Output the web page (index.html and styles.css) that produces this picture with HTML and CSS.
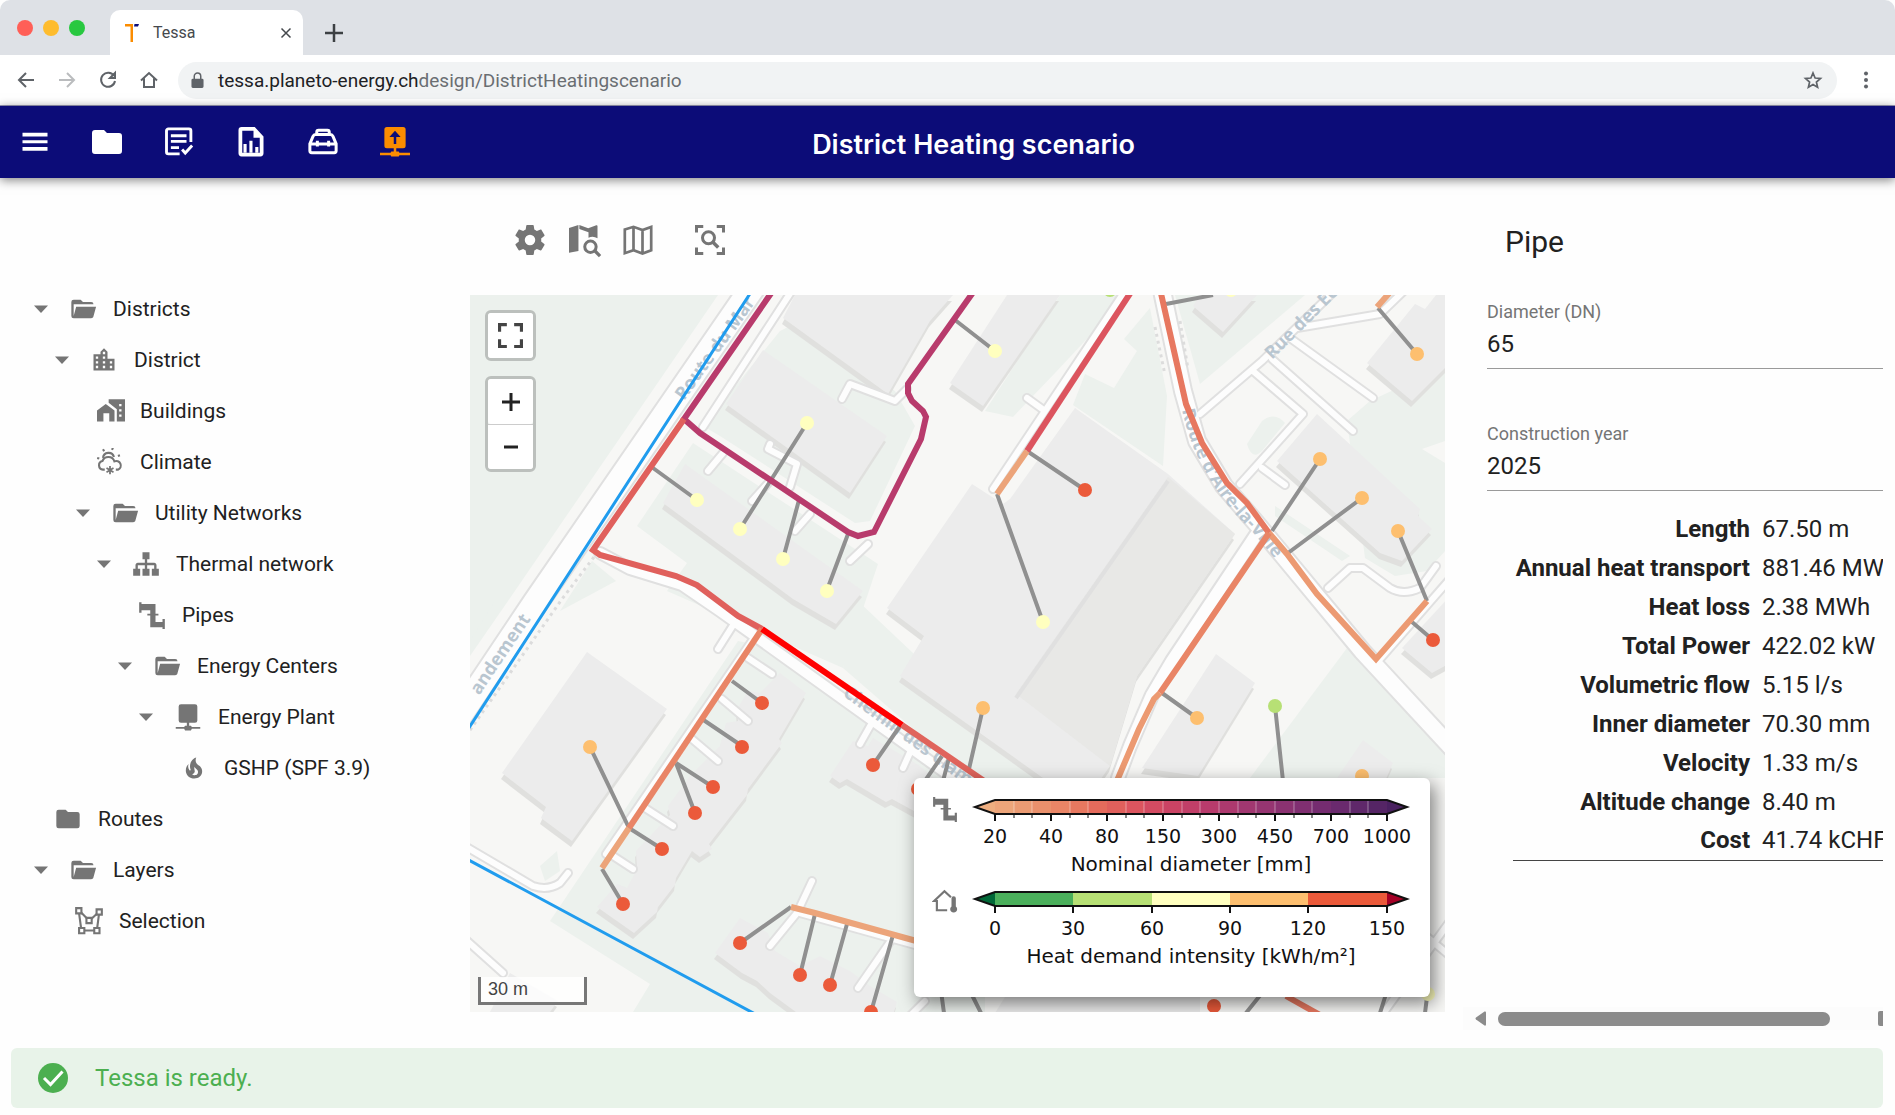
FILE: index.html
```html
<!DOCTYPE html>
<html lang="en">
  <head>
    <meta charset="utf-8" />
    <title>Tessa</title>
    <link rel="stylesheet" href="styles.css" />
  </head>
  <body>
    <svg class="sprite" aria-hidden="true">
      <symbol id="caret" viewBox="0 0 24 24"><path d="M6 9h12l-6 6.500z" /></symbol>
      <symbol id="folder" viewBox="0 0 24 24">
        <path d="M10 4H4a2 2 0 0 0-2 2v12a2 2 0 0 0 2 2h16a2 2 0 0 0 2-2V8a2 2 0 0 0-2-2h-8z" />
      </symbol>
      <symbol id="folder-open" viewBox="0 0 24 24">
        <path d="M19 20H4a2 2 0 0 1-2-2V6a2 2 0 0 1 2-2h6l2 2h7a2 2 0 0 1 2 2H4v10l2.140-8h17.070l-2.280 8.500c-.23.87-1.010 1.500-1.930 1.500z" />
      </symbol>
      <symbol id="city" viewBox="0 0 24 24">
        <path d="M19 15H17V13H19M19 19H17V17H19M13 7H11V5H13M13 11H11V9H13M13 15H11V13H13M13 19H11V17H13M7 11H5V9H7M7 15H5V13H7M7 19H5V17H7M15 11V5L12 2L9 5V7H3V21H21V11H15Z" />
      </symbol>
      <symbol id="home-city" viewBox="0 0 24 24">
        <path fill-rule="evenodd" d="M0 21V11.500L7.500 6 15 11.500V21h-4.500v-7h-5v7zM10 2h14v19h-7V10.500L10 5zM19 6v2h2V6zm0 4.500v2h2v-2zm0 4.500v2h2v-2z" />
      </symbol>
      <symbol id="climate" viewBox="0 0 24 24">
        <g fill="none" stroke="currentColor" stroke-width="1.800">
          <path d="M7.500 18.500H6a3.700 3.700 0 0 1-.5-7.300 5.500 5.500 0 0 1 10.300.3 3.600 3.600 0 0 1 3.200 7H17" />
          <path d="M6 8.500a4.800 4.800 0 0 1 9.400-.8" />
          <path d="M12 15.500v7M9 17.200l6 3.500M15 17.200l-6 3.500" stroke-width="1.500" />
          <path d="M6 1l1 1.800M14.500-.2l-.8 1.800M1 8.500l1.800.5M18.800 6.800l1.700-.6" />
        </g>
      </symbol>
      <symbol id="sitemap" viewBox="0 0 24 24">
        <path d="M9 2V8H11V11H5C3.890 11 3 11.890 3 13V16H1V22H7V16H5V13H11V16H9V22H15V16H13V13H19V16H17V22H23V16H21V13C21 11.890 20.110 11 19 11H13V8H15V2H9Z" />
      </symbol>
      <symbol id="pipe" viewBox="0 0 24 24">
        <path d="M1 1h2v1.500h12V11h2.500v1.500H15V18h6v-2.500h2V24h-2v-1.500h-10.500V12.500H8V11h2.500V8H3v2H1z" />
      </symbol>
      <symbol id="plant" viewBox="0 0 24 24">
        <path d="M6 1h12a2 2 0 0 1 2 2v12a2 2 0 0 1-2 2h-5v2.500h1.500l.8 1H22.500V22H15.300l-.8 1.500h-5L8.700 22H1.500v-1.500h7.200l.8-1H11V17H6a2 2 0 0 1-2-2V3a2 2 0 0 1 2-2z" />
      </symbol>
      <symbol id="plant-up" viewBox="0 0 24 24">
        <path fill-rule="evenodd" d="M5.500 0h13A2 2 0 0 1 20.500 2v13a2 2 0 0 1-2 2H13v2.500h2l.5 1H24v2h-8.500l-.5 1H9l-.5-1H0v-2h8.500l.5-1h2V17H5.500a2 2 0 0 1-2-2V2a2 2 0 0 1 2-2zM12 3L7.500 8H11v5.500h2V8h3.500z" />
      </symbol>
      <symbol id="fire" viewBox="0 0 24 24">
        <path d="M17.660 11.200c-.23-.3-.51-.56-.77-.82-.67-.6-1.430-1.030-2.070-1.660C13.330 7.260 13 4.850 13.950 3c-.95.23-1.780.75-2.490 1.320-2.590 2.080-3.610 5.750-2.390 8.900.04.1.08.2.08.33 0 .22-.15.42-.35.5-.23.1-.47.04-.66-.12a.58.58 0 0 1-.14-.17c-1.130-1.430-1.310-3.480-.55-5.120C5.780 10 4.870 12.300 5 14.470c.06.5.12 1 .29 1.500.14.6.41 1.200.71 1.730 1.080 1.730 2.950 2.970 4.960 3.220 2.140.27 4.430-.12 6.070-1.600 1.830-1.660 2.470-4.320 1.530-6.600l-.13-.26c-.21-.46-.77-1.260-.77-1.260m-3.160 6.300c-.28.24-.74.5-1.100.6-1.120.4-2.240-.16-2.900-.82 1.190-.28 1.900-1.160 2.110-2.050.17-.8-.15-1.460-.28-2.230-.12-.74-.1-1.370.17-2.060.19.38.39.76.63 1.060.77 1 1.980 1.440 2.240 2.800.04.14.06.28.06.43.03.82-.33 1.720-.93 2.270z" />
      </symbol>
      <symbol id="vector" viewBox="0 0 24 24">
        <g fill="none" stroke="currentColor" stroke-width="1.800">
          <path d="M1 1h4.500v4.500H1zM18.500 2H23v4.500h-4.500zM9.800 9.300h4.500v4.500H9.800zM3.500 18H8v4.500H3.500zM16.500 18H21v4.500h-4.500z" />
          <path d="M3.500 5.500l1.700 12.500M20.500 6.500L19 18M8 20.200h8.500M5.500 5l4.400 4.500M18.500 6l-4.300 4" />
        </g>
      </symbol>
      <symbol id="menu" viewBox="0 0 24 24"><path d="M2 4.500h20v3H2zM2 10.500h20v2.500H2zM2 16h20v3H2z" /></symbol>
      <symbol id="list-check" viewBox="0 0 24 24">
        <g fill="none" stroke="currentColor" stroke-width="2.300">
          <path d="M12.500 21.500H3.500a1.500 1.500 0 0 1-1.500-1.500V3a1.500 1.500 0 0 1 1.500-1.500H20A1.500 1.500 0 0 1 21.500 3v9" />
          <path d="M5.500 7H18M5.500 11.500H18M5.500 16.500H12M14.500 18l2.500 2.800 5.500-6" />
        </g>
      </symbol>
      <symbol id="file-chart" viewBox="0 0 24 24">
        <path fill-rule="evenodd" d="M4.500 0H15l7 7.500V21a2.500 2.500 0 0 1-2.500 2.500h-15A2.500 2.500 0 0 1 2 21V2.500A2.500 2.500 0 0 1 4.500 0zM5 3v17.500h14V8.500h-5V3z" />
        <path d="M6 13.500h2.500v7H6zM10.700 11h2.500v9.500h-2.500zM15.400 16h2.500v4.500h-2.500z" />
      </symbol>
      <symbol id="toolbox" viewBox="0 0 24 24">
        <g fill="none" stroke="currentColor" stroke-width="2.400">
          <path d="M7 5.500V4a1.500 1.500 0 0 1 1.500-1.500h7A1.500 1.500 0 0 1 17 4v1.500M6 6h12c1 0 1.600.6 2 1.500l2.500 6V19a1.500 1.500 0 0 1-1.500 1.500H3A1.500 1.500 0 0 1 1.500 19v-5.500l2.500-6C4.400 6.600 5 6 6 6zM1.500 13.500h21M7.500 11v4.500M16.500 11v4.500" />
        </g>
      </symbol>
      <symbol id="cog" viewBox="0 0 24 24">
        <path d="M12 15.500A3.500 3.500 0 0 1 8.500 12A3.500 3.500 0 0 1 12 8.500A3.500 3.500 0 0 1 15.500 12A3.500 3.500 0 0 1 12 15.500M19.430 12.970C19.470 12.650 19.500 12.330 19.500 12C19.500 11.670 19.470 11.340 19.430 11L21.540 9.370C21.730 9.220 21.780 8.950 21.660 8.730L19.660 5.270C19.540 5.050 19.270 4.960 19.050 5.050L16.560 6.050C16.040 5.660 15.500 5.320 14.870 5.070L14.500 2.420C14.460 2.180 14.250 2 14 2H10C9.750 2 9.540 2.180 9.500 2.420L9.130 5.070C8.500 5.320 7.960 5.660 7.440 6.050L4.950 5.050C4.730 4.960 4.460 5.050 4.340 5.270L2.340 8.730C2.210 8.950 2.270 9.220 2.460 9.370L4.570 11C4.530 11.340 4.500 11.670 4.500 12C4.500 12.330 4.530 12.650 4.570 12.970L2.460 14.630C2.270 14.780 2.210 15.050 2.340 15.270L4.340 18.730C4.460 18.950 4.730 19.030 4.950 18.950L7.440 17.940C7.960 18.340 8.500 18.680 9.130 18.930L9.500 21.580C9.540 21.820 9.750 22 10 22H14C14.250 22 14.460 21.820 14.500 21.580L14.870 18.930C15.500 18.670 16.040 18.340 16.560 17.940L19.050 18.950C19.270 19.030 19.540 18.950 19.660 18.730L21.660 15.270C21.780 15.050 21.730 14.780 21.540 14.630L19.430 12.970Z" />
      </symbol>
      <symbol id="map-search" viewBox="0 0 24 24">
        <path d="M2 4L8.300 2v17.300L2 20.500zM8.900 2l5.900 2.200 5.400-2a.6.6 0 0 1 .8.500v8.200a6 6 0 0 0-6-.4V6.800L8.900 4.600z" />
        <circle cx="16.300" cy="16.500" r="3.800" fill="none" stroke="currentColor" stroke-width="2" />
        <path d="M19 19l3.700 3.700" stroke="currentColor" stroke-width="2.200" />
      </symbol>
      <symbol id="map-outline" viewBox="0 0 24 24">
        <path d="M3.200 5L9 3.200l6 2.100 5.800-2v15.500L15 21l-6-2.200-5.800 2zM9 3.200v15.600M15 5.300V21" fill="none" stroke="currentColor" stroke-width="1.800" />
      </symbol>
      <symbol id="focus" viewBox="0 0 24 24">
        <g fill="none" stroke="currentColor" stroke-width="2">
          <path d="M3 7V3h4.500M16.500 3H21v4M21 17v4h-4.500M7.500 21H3v-4" />
          <circle cx="11" cy="10.500" r="4" />
          <path d="M14 13.500l3.500 3.500" stroke-width="2.300" />
        </g>
      </symbol>
      <symbol id="full" viewBox="0 0 24 24">
        <path d="M1.500 8.500v-7h7M15.500 1.500h7v7M22.500 15.500v7h-7M8.500 22.500h-7v-7" fill="none" stroke="currentColor" stroke-width="3" />
      </symbol>
      <symbol id="house-temp" viewBox="0 0 24 24">
        <path d="M14 20.500H4.500v-8.500H2l9.500-9 6 5.500" fill="none" stroke="currentColor" stroke-width="2" />
        <path d="M18 9.500a2 2 0 0 1 4 0V17a3.200 3.200 0 1 1-4 0z" />
      </symbol>
    </svg>

    <header class="browser">
      <div class="tabs">
        <span class="light red"></span>
        <span class="light yellow"></span>
        <span class="light green"></span>
        <div class="tab">
          <svg class="favicon" viewBox="0 0 14 18">
            <path d="M0 0h8v2H8v16H5.500V2.500H0z" fill="#fb8c00" />
            <path d="M9.500 0H14l-1 2.500H9z" fill="#0c0c78" />
          </svg>
          <span>Tessa</span>
          <button class="close" aria-label="Close tab">
            <svg viewBox="0 0 12 12"><path d="M1.500 1.500l9 9M10.500 1.500l-9 9" /></svg>
          </button>
        </div>
        <button class="new-tab" aria-label="New tab">
          <svg viewBox="0 0 18 18"><path d="M9 0v18M0 9h18" /></svg>
        </button>
      </div>
      <div class="toolbar">
        <button aria-label="Back">
          <svg viewBox="0 0 24 24"><path d="M20 12H5M12 5l-7 7 7 7" /></svg>
        </button>
        <button class="disabled" aria-label="Forward">
          <svg viewBox="0 0 24 24"><path d="M4 12h15M12 5l7 7-7 7" /></svg>
        </button>
        <button aria-label="Reload">
          <svg viewBox="0 0 24 24"><path d="M18 8A7 7 0 1 0 19 13M19 5v5h-5z" /></svg>
        </button>
        <button aria-label="Home">
          <svg viewBox="0 0 24 24"><path d="M4 12.500l8-7.500 8 7.500M7 10.500V19h10v-8.500" /></svg>
        </button>
        <div class="address">
          <svg class="lock" viewBox="0 0 14 18">
            <path d="M2 7h10a1.500 1.500 0 0 1 1.500 1.500v7A1.500 1.500 0 0 1 12 17H2A1.500 1.500 0 0 1 .5 15.500v-7A1.500 1.500 0 0 1 2 7z" />
            <path d="M3.500 8V4.500a3.500 3.500 0 0 1 7 0V8" fill="none" stroke="currentColor" stroke-width="1.600" />
          </svg>
          <span class="url"><b>tessa.planeto-energy.ch</b>design/DistrictHeatingscenario</span>
          <button class="star" aria-label="Bookmark">
            <svg viewBox="0 0 24 24"><path d="M12 5l2.100 5 5.400.4-4.100 3.600 1.200 5.300-4.600-2.800-4.600 2.800 1.200-5.300-4.100-3.600 5.400-.4z" /></svg>
          </button>
        </div>
        <button class="dots" aria-label="Browser menu">
          <svg viewBox="0 0 24 24"><circle cx="12" cy="5.500" r="2" /><circle cx="12" cy="12" r="2" /><circle cx="12" cy="18.500" r="2" /></svg>
        </button>
      </div>
    </header>

    <nav class="app-bar">
      <div class="app-icons">
        <button aria-label="Menu"><svg class="icon-lg"><use href="#menu" /></svg></button>
        <button aria-label="Projects"><svg class="icon-lg"><use href="#folder" /></svg></button>
        <button aria-label="Tasks"><svg class="icon-lg"><use href="#list-check" /></svg></button>
        <button aria-label="Reports"><svg class="icon-lg"><use href="#file-chart" /></svg></button>
        <button aria-label="Tools"><svg class="icon-lg"><use href="#toolbox" /></svg></button>
        <button class="active" aria-label="Publish"><svg class="icon-lg"><use href="#plant-up" /></svg></button>
      </div>
      <h1>District Heating scenario</h1>
    </nav>

    <main>
      <aside class="tree">
        <ul>
          <li>
            <div class="row"><button aria-label="Collapse"><svg class="icon"><use href="#caret" /></svg></button><svg class="icon"><use href="#folder-open" /></svg>Districts</div>
            <ul>
              <li>
                <div class="row"><button aria-label="Collapse"><svg class="icon"><use href="#caret" /></svg></button><svg class="icon"><use href="#city" /></svg>District</div>
                <ul>
                  <li><div class="row leaf"><svg class="icon wide"><use href="#home-city" /></svg>Buildings</div></li>
                  <li><div class="row leaf"><svg class="icon"><use href="#climate" /></svg>Climate</div></li>
                  <li>
                    <div class="row"><button aria-label="Collapse"><svg class="icon"><use href="#caret" /></svg></button><svg class="icon"><use href="#folder-open" /></svg>Utility Networks</div>
                    <ul>
                      <li>
                        <div class="row"><button aria-label="Collapse"><svg class="icon"><use href="#caret" /></svg></button><svg class="icon"><use href="#sitemap" /></svg>Thermal network</div>
                        <ul>
                          <li><div class="row leaf"><svg class="icon"><use href="#pipe" /></svg>Pipes</div></li>
                          <li>
                            <div class="row"><button aria-label="Collapse"><svg class="icon"><use href="#caret" /></svg></button><svg class="icon"><use href="#folder-open" /></svg>Energy Centers</div>
                            <ul>
                              <li>
                                <div class="row"><button aria-label="Collapse"><svg class="icon"><use href="#caret" /></svg></button><svg class="icon"><use href="#plant" /></svg>Energy Plant</div>
                                <ul>
                                  <li><div class="row leaf"><svg class="icon"><use href="#fire" /></svg>GSHP (SPF 3.9)</div></li>
                                </ul>
                              </li>
                            </ul>
                          </li>
                        </ul>
                      </li>
                    </ul>
                  </li>
                </ul>
              </li>
            </ul>
          </li>
          <li><div class="row leaf"><svg class="icon"><use href="#folder" /></svg>Routes</div></li>
          <li>
            <div class="row"><button aria-label="Collapse"><svg class="icon"><use href="#caret" /></svg></button><svg class="icon"><use href="#folder-open" /></svg>Layers</div>
            <ul>
              <li><div class="row leaf"><svg class="icon"><use href="#vector" /></svg>Selection</div></li>
            </ul>
          </li>
        </ul>
      </aside>

      <section class="center">
        <div class="map-tools">
          <button aria-label="Settings"><svg class="icon-lg"><use href="#cog" /></svg></button>
          <button aria-label="Search on map"><svg class="icon-lg"><use href="#map-search" /></svg></button>
          <button aria-label="Base map"><svg class="icon-lg"><use href="#map-outline" /></svg></button>
          <button class="apart" aria-label="Zoom to extent"><svg class="icon-lg"><use href="#focus" /></svg></button>
        </div>

        <div class="map">
          <svg class="canvas" viewBox="470 294 975 717" preserveAspectRatio="xMinYMin slice">
            <defs>
              <g id="roads">
                <path class="w26" d="M757 280L535 602 440 744" />
                <path class="w18" d="M1160 280L1183 390 1197 440 1224 485 1256 522 1362 650 1460 756" />
                <path class="w14" d="M1256 534L1172 660 1152 694 1130 745 1118 777" />
                <path class="w10" d="M1345 280L1262 360 1200 413M1253 370L1303 413 1240 483M1262 467L1285 484M1272 358L1353 430M1290 337L1373 397M1297 327L1380 313 1410 284M1328 587L1350 567H1363L1390 587Q1403 595 1420 587L1436 565M1374 665L1450 578" />
                <path class="w12" d="M600 552L630 568 682 584 720 610 762 640 985 800" />
                <path class="w10" d="M793 288L703 426M842 398L850 383 895 400 907 388M770 443L768 448 797 463 790 486M770 480L752 500M723 452L708 470M810 513L795 530M868 543L850 560M1125 290L993 488M1027 397L1045 410" />
                <path class="w10" d="M737 618L718 648M748 657L772 673M722 698L748 720M692 738L718 760M645 807L673 825M610 853L633 868M756 634L606 853M873 720L860 743M912 747L903 767" />
                <path class="w10" d="M465 845L533 885Q548 890 560 882L568 872M465 938L503 972M812 880L797 912 770 945M892 938L858 987M800 912L915 944M925 1000L905 1020M1385 1010L1450 920M1420 930L1450 955" />
              </g>
            </defs>

            <rect class="ground" x="470" y="294" width="975" height="717" />
            <g class="grass">
              <path d="M470 294H718L508 600 470 655z" />
              <path d="M780 330L800 320 895 390 915 425 870 520 855 522 720 435 703 425z" />
              <path d="M693 442L637 525 687 562 667 590 843 667 878 563z" />
              <path d="M592 560L560 610 616 580z" />
              <path d="M738 640L768 646 985 795V1011H633L650 983 550 920z" />
              <path d="M843 667L858 600 1045 777 985 790z" />
              <path d="M1060 294H1128L1055 372 1013 416 985 410z" />
              <path d="M1085 373L1114 387 1137 350 1124 338 1150 307 1167 395 1163 465 1073 404z" />
              <path d="M1175 294H1305L1200 383z" />
              <path d="M1347 420L1370 400 1445 365V440L1422 448 1445 462V550L1427 570 1395 575 1365 557z" />
              <path d="M1247 443L1262 420Q1275 410 1285 422L1262 450Q1252 460 1247 443z" />
              <path d="M1275 505L1350 555 1342 560 1275 515z" />
              <path d="M1347 647L1250 777H1445V742z" />
              <path d="M470 600V640L495 600zM540 865L557 850 560 870 545 880z" />
            </g>

            <g class="buildings">
              <path d="M795 294H953L930 320 888 393 783 317z" />
              <path d="M763 349L887 435 850 492 726 403z" />
              <path d="M685 463L863 590 836 623 793 598 663 502z" />
              <path d="M587 651L667 708 572 840 541 817 546 806 502 772z" />
              <path d="M780 672L806 692 779 738 782 742 748 788 747 794 709 843 712 848 700 856 692 850 676 877 675 884 658 906 657 911 634 932 597 906 617 883 627 887 637 868 636 850 670 814 668 805 690 775 715 750 720 745 726 722 738 720 737 708 748 690 760 692z" />
              <path d="M740 917L768 932 775 950 800 965 820 955 850 970 870 985 897 1001 893 1014H800L770 992 757 980 742 972 715 952z" />
              <path d="M853 740L868 745 873 737 920 765 960 800V834L914 810 892 798 886 801 847 778 840 782 830 775z" />
              <path d="M1075 407L1168 473 1235 533 1137 675 1110 765 1098 782H1050L900 675 924 635 887 607 972 483 1003 503 1010 498z" />
              <path d="M1007 294H1060L983 405 950 382z" />
              <path d="M1317 413L1420 508 1418 515 1432 528 1402 560 1380 552 1277 460z" />
              <path d="M1415 303L1425 308 1436 294H1450V362L1412 400 1367 362z" />
              <path d="M1200 294H1257L1223 331 1193 305z" />
              <path d="M1216 653L1255 682 1198 775 1142 767z" />
              <path d="M1363 739L1393 762 1385 780H1335z" />
              <path d="M1450 595V662L1432 672 1402 647z" />
              <path d="M1015 980H1200V1020H990z" />
              <path d="M510 972L558 1000 550 1011H490z" />
            </g>
            <path class="annex" d="M1168 476L1235 533 1137 675 1110 765 1016 693z" />
            <path class="ridge" d="M1168 480L1016 697" />

            <use href="#roads" class="casing" />
            <use href="#roads" class="fill" />
            <path class="dotted" d="M594 556L562 598 468 732M1155 326L1165 374M1180 320L1188 368" />

            <g class="street">
              <path id="arenieres" d="M1182 409Q1198 480 1252 530L1330 625" fill="none" />
              <text transform="translate(684 400) rotate(-54)">Route du Mar</text>
              <text transform="translate(531 618) rotate(-56)" text-anchor="end">andement</text>
              <text transform="translate(1272 359) rotate(-45)">Rue des Ec</text>
              <text><textPath href="#arenieres">Route d'Aire-la-Ville</textPath></text>
              <text transform="translate(842 694) rotate(36)">Chemin des Clam</text>
            </g>

            <path class="boundary" d="M753 288L465 733M465 857L757 1014" />

            <g class="links">
              <path d="M653 467L697 499M807 422L740 528M799 499L783 558M848 533L827 589" />
              <path d="M732 680L762 702M702 718L742 745M676 762L713 786M676 762L695 812M629 827L662 848M629 827L590 746M602 868L623 903" />
              <path d="M900 725L873 764M942 755L918 790M949 757L943 780M983 707L969 768" />
              <path d="M791 906L740 942M815 913L800 974M847 923L830 984M893 934L871 1011" />
              <path d="M955 319L995 350M1027 450L1085 489M997 493L1043 621M1166 303L1213 294M1378 307L1417 353" />
              <path d="M1272 530L1320 458M1288 552L1362 497M1427 600L1398 530M1412 621L1433 639M1162 692L1197 717M1275 705L1283 780" />
              <path d="M941 990L944 1012M970 990L981 1012M1262 992L1246 1012M1387 990L1380 1012M1427 996L1425 1012" />
            </g>

            <g class="pipes">
              <path stroke="#b83b6c" d="M774 288L684 418 700 432 848 531 858 535 874 531 921 438 926 416 923 410 912 400 908 392V383L974 290" />
              <path stroke="#e0605c" d="M684 418L593 549 600 554 676 575 697 584 738 615 762 628" />
              <path stroke="#e0645c" d="M902 724L990 784" />
              <path stroke="#e98566" d="M762 628L629 827" />
              <path stroke="#eca47a" d="M629 827L602 867M791 906L815 912 920 941" />
              <path stroke="#dc555f" d="M1133 288L1027 450" />
              <path stroke="#eca47a" d="M1027 450L997 493M1393 288L1377 306" />
              <path stroke="#e77860" d="M1160 288L1186 403 1202 442 1227 482 1247 502 1269 532" />
              <path stroke="#ec9a72" d="M1269 532L1287 553 1317 593 1376 658 1427 600" />
              <path stroke="#e98566" d="M1269 532L1182 660 1160 692" />
              <path stroke="#ec9a72" d="M1160 692L1154 698 1139 728 1116 782" />
              <path stroke="#e77860" d="M1286 995L1320 1014" />
              <path stroke="#ff0000" d="M762 628L902 724" />
            </g>

            <g fill="#ffffbf">
              <circle cx="697" cy="499" r="7" /><circle cx="807" cy="422" r="7" /><circle cx="740" cy="528" r="7" />
              <circle cx="783" cy="558" r="7" /><circle cx="827" cy="590" r="7" /><circle cx="995" cy="350" r="7" />
              <circle cx="1043" cy="621" r="7" /><circle cx="1231" cy="289" r="7" /><circle cx="1428" cy="993" r="7" />
            </g>
            <g fill="#fdbf6f">
              <circle cx="590" cy="746" r="7" /><circle cx="983" cy="707" r="7" /><circle cx="1197" cy="717" r="7" />
              <circle cx="1320" cy="458" r="7" /><circle cx="1362" cy="497" r="7" /><circle cx="1398" cy="530" r="7" />
              <circle cx="1417" cy="353" r="7" /><circle cx="1362" cy="775" r="7" />
            </g>
            <g fill="#eb5a3a">
              <circle cx="762" cy="702" r="7" /><circle cx="742" cy="746" r="7" /><circle cx="713" cy="786" r="7" />
              <circle cx="695" cy="812" r="7" /><circle cx="662" cy="848" r="7" /><circle cx="623" cy="903" r="7" />
              <circle cx="873" cy="764" r="7" /><circle cx="918" cy="788" r="7" /><circle cx="740" cy="942" r="7" />
              <circle cx="800" cy="974" r="7" /><circle cx="830" cy="984" r="7" /><circle cx="871" cy="1011" r="7" />
              <circle cx="1085" cy="489" r="7" /><circle cx="1433" cy="639" r="7" /><circle cx="1214" cy="1005" r="7" />
            </g>
            <g fill="#b7e075">
              <circle cx="1110" cy="289" r="7" /><circle cx="1275" cy="705" r="7" />
            </g>
          </svg>

          <div class="controls">
            <div class="control"><button aria-label="Full screen"><svg class="full"><use href="#full" /></svg></button></div>
            <div class="control">
              <button aria-label="Zoom in"><svg viewBox="0 0 18 18"><path d="M9 0v18M0 9h18" /></svg></button>
              <button aria-label="Zoom out"><svg viewBox="0 0 18 18"><path d="M2 9h14" /></svg></button>
            </div>
          </div>
          <div class="scale">30 m</div>

          <div class="legend">
            <div class="legend-row">
              <svg class="legend-icon"><use href="#pipe" /></svg>
              <svg class="bar" viewBox="0 0 450 92">
                <path d="M30 9L10 16 30 23z" fill="#eeae80" />
                <rect x="30" y="9" width="19" height="14" fill="#eda57a" />
                <rect x="49" y="9" width="19" height="14" fill="#eb9b73" />
                <rect x="67" y="9" width="19" height="14" fill="#e9906c" />
                <rect x="86" y="9" width="19" height="14" fill="#e98566" />
                <rect x="105" y="9" width="19" height="14" fill="#e77860" />
                <rect x="123" y="9" width="19" height="14" fill="#e56b5c" />
                <rect x="142" y="9" width="19" height="14" fill="#e0605c" />
                <rect x="161" y="9" width="19" height="14" fill="#dc555f" />
                <rect x="179" y="9" width="19" height="14" fill="#d34b62" />
                <rect x="198" y="9" width="19" height="14" fill="#ca4364" />
                <rect x="217" y="9" width="19" height="14" fill="#c13f68" />
                <rect x="235" y="9" width="19" height="14" fill="#b83b6c" />
                <rect x="254" y="9" width="19" height="14" fill="#ad396e" />
                <rect x="273" y="9" width="19" height="14" fill="#a13770" />
                <rect x="291" y="9" width="19" height="14" fill="#963571" />
                <rect x="310" y="9" width="19" height="14" fill="#8b3271" />
                <rect x="329" y="9" width="19" height="14" fill="#802f71" />
                <rect x="347" y="9" width="19" height="14" fill="#752c70" />
                <rect x="366" y="9" width="19" height="14" fill="#6a2a6e" />
                <rect x="385" y="9" width="19" height="14" fill="#5f286a" />
                <rect x="403" y="9" width="19" height="14" fill="#552565" />
                <path d="M422 9L442 16 422 23z" fill="#4a2160" />
                <path class="split" d="M49 9v14M67 9v14M105 9v14M123 9v14M161 9v14M179 9v14M198 9v14M217 9v14M235 9v14M254 9v14M273 9v14M291 9v14M310 9v14M329 9v14M347 9v14M385 9v14M403 9v14" />
                <path class="outline" d="M30 9H422L442 16 422 23H30L10 16z" />
                <path class="tick" d="M30 23v7M86 23v7M142 23v7M198 23v7M254 23v7M310 23v7M366 23v7M422 23v7" />
                <path class="tick minor" d="M49 23v4M67 23v4M105 23v4M123 23v4M161 23v4M179 23v4M217 23v4M235 23v4M273 23v4M291 23v4M329 23v4M347 23v4M385 23v4M403 23v4" />
                <text x="30" y="52">20</text><text x="86" y="52">40</text><text x="142" y="52">80</text>
                <text x="198" y="52">150</text><text x="254" y="52">300</text><text x="310" y="52">450</text>
                <text x="366" y="52">700</text><text x="422" y="52">1000</text>
                <text class="caption" x="226" y="80">Nominal diameter [mm]</text>
              </svg>
            </div>
            <div class="legend-row">
              <svg class="legend-icon"><use href="#house-temp" /></svg>
              <svg class="bar" viewBox="0 0 450 92">
                <path d="M30 9L10 16 30 23z" fill="#006837" />
                <rect x="30" y="9" width="79" height="14" fill="#4bb05c" />
                <rect x="108" y="9" width="79" height="14" fill="#b7e075" />
                <rect x="187" y="9" width="79" height="14" fill="#ffffbf" />
                <rect x="265" y="9" width="79" height="14" fill="#fdbf6f" />
                <rect x="343" y="9" width="79" height="14" fill="#eb5a3a" />
                <path d="M422 9L442 16 422 23z" fill="#a50026" />
                <path class="outline" d="M30 9H422L442 16 422 23H30L10 16z" />
                <path class="tick" d="M30 23v7M108 23v7M187 23v7M265 23v7M343 23v7M422 23v7" />
                <text x="30" y="52">0</text><text x="108" y="52">30</text><text x="187" y="52">60</text>
                <text x="265" y="52">90</text><text x="343" y="52">120</text><text x="422" y="52">150</text>
                <text class="caption" x="226" y="80">Heat demand intensity [kWh/m²]</text>
              </svg>
            </div>
          </div>
        </div>
      </section>

      <aside class="panel">
        <div class="panel-body">
          <h2>Pipe</h2>
          <div class="field">
            <label for="diameter">Diameter (DN)</label>
            <input id="diameter" type="text" value="65" />
          </div>
          <div class="field">
            <label for="year">Construction year</label>
            <input id="year" type="text" value="2025" />
          </div>
          <table>
            <tbody>
              <tr><th>Length</th><td>67.50 m</td></tr>
              <tr><th>Annual heat transport</th><td>881.46 MWh</td></tr>
              <tr><th>Heat loss</th><td>2.38 MWh</td></tr>
              <tr><th>Total Power</th><td>422.02 kW</td></tr>
              <tr><th>Volumetric flow</th><td>5.15 l/s</td></tr>
              <tr><th>Inner diameter</th><td>70.30 mm</td></tr>
              <tr><th>Velocity</th><td>1.33 m/s</td></tr>
              <tr><th>Altitude change</th><td>8.40 m</td></tr>
              <tr><th>Cost</th><td>41.74 kCHF</td></tr>
            </tbody>
          </table>
        </div>
        <div class="scrollbar">
          <svg viewBox="0 0 11 15"><path d="M11 1.500v12q0 1.500-1.500 1L1 8.500q-1-1 0-2L9.500.5Q11 0 11 1.500z" /></svg>
          <span class="thumb"></span>
          <span class="end"></span>
        </div>
      </aside>
    </main>

    <footer class="status">
      <svg viewBox="0 0 30 30"><circle cx="15" cy="15" r="15" /><path d="M6 15l6.500 6.500L24.500 8.500" /></svg>
      Tessa is ready.
    </footer>
  </body>
</html>
```
FILE: styles.css
```css
* {
  box-sizing: border-box;
}

body {
  margin: 0;
  min-height: 100vh;
  display: flex;
  flex-direction: column;
  background-color: #fefefe;
  color: #212121;
  font-family: Roboto, "Liberation Sans", sans-serif;
  overflow-x: hidden;
}

button {
  display: flex;
  align-items: center;
  justify-content: center;
  padding: 0;
  border: none;
  background: none;
  color: inherit;
  cursor: pointer;
}

ul {
  list-style: none;
  margin: 0;
  padding: 0;
}

svg {
  display: block;
  flex: none;
  fill: currentColor;
}

.sprite {
  position: absolute;
  width: 0;
  height: 0;
}

.icon {
  width: 28px;
  height: 28px;
  color: #757575;
  overflow: visible;
}

.icon-lg {
  width: 36px;
  height: 36px;
}

/* browser frame */
.browser {
  border-radius: 10px 10px 0 0;
  background-color: #dee1e6;
  overflow: hidden;
}

.tabs {
  display: flex;
  align-items: center;
  gap: 10px;
  height: 55px;
  padding-left: 17px;
}

.light {
  width: 16px;
  height: 16px;
  border-radius: 50%;
}

.red {
  background-color: #ff5f57;
}

.yellow {
  background-color: #febc2e;
}

.green {
  background-color: #28c840;
}

.tab {
  display: flex;
  align-items: center;
  align-self: flex-end;
  gap: 14px;
  width: 193px;
  height: 45px;
  margin-left: 15px;
  padding: 0 11px 0 15px;
  border-radius: 10px 10px 0 0;
  background-color: #fff;
  color: #45494d;
  font-size: 16px;
}

.favicon {
  width: 14px;
  height: 18px;
}

.close {
  margin-left: auto;
}

.close svg {
  width: 12px;
  height: 12px;
  stroke: #45494d;
  stroke-width: 1.5;
}

.new-tab {
  margin: 10px 0 0 12px;
}

.new-tab svg {
  width: 18px;
  height: 18px;
  stroke: #3c4043;
  stroke-width: 2.5;
}

.toolbar {
  display: flex;
  align-items: center;
  gap: 17px;
  height: 51px;
  padding: 0 17px 0 14px;
  background-color: #fff;
  border-bottom: 1px solid #9a9ab8;
  color: #5f6368;
}

.toolbar button svg {
  width: 24px;
  height: 24px;
  fill: none;
  stroke: currentColor;
  stroke-width: 2;
}

.toolbar .disabled {
  color: #babcbe;
}

.toolbar .dots svg {
  fill: currentColor;
  stroke: none;
}

.address {
  flex: 1;
  display: flex;
  align-items: center;
  height: 37px;
  padding: 0 12px 0 13px;
  border-radius: 19px;
  background-color: #f1f3f4;
}

.toolbar .star svg {
  stroke-width: 1.7;
}

.lock {
  width: 13px;
  height: 17px;
}

.url {
  flex: 1;
  margin-left: 14px;
  color: #6a6e72;
  font-size: 19px;
}

.url b {
  color: #202124;
  font-weight: 400;
}

/* application bar */
.app-bar {
  display: grid;
  grid-template-columns: 470px 1fr 450px;
  align-items: center;
  height: 72px;
  background-color: #0c0c78;
  color: #fff;
  box-shadow: 0 2px 10px rgba(0, 0, 0, 0.5);
  z-index: 1;
}

.app-icons {
  display: flex;
  gap: 36px;
  padding-left: 17px;
}

.app-icons .active {
  color: #fb8c00;
}

.app-icons svg {
  padding: 3px;
}

.app-icons svg:has([href="#folder"]) {
  padding: 0;
}

.app-bar h1 {
  margin: 0;
  padding: 5px 0 0 32px;
  font: 600 27px Inter, "Open Sans", sans-serif;
  text-align: center;
}

/* three columns */
main {
  flex: 1;
  display: grid;
  grid-template-columns: 470px 1fr 450px;
}

.tree {
  padding-top: 105px;
  font-size: 21px;
}

.tree ul ul {
  padding-left: 21px;
}

.row {
  display: flex;
  align-items: center;
  gap: 16px;
  height: 51px;
  padding-left: 27px;
  white-space: nowrap;
}

.row button {
  margin-right: -2px;
}

.row.leaf {
  padding-left: 54px;
}

.wide {
  width: 30px;
  margin-right: -2px;
}

.center {
  display: flex;
  flex-direction: column;
  padding-bottom: 36px;
}

.map-tools {
  display: flex;
  align-items: center;
  gap: 18px;
  height: 117px;
  padding: 7px 0 0 42px;
  color: #757575;
}

.apart {
  margin-left: 18px;
}

/* map */
.map {
  position: relative;
  flex: 1;
  min-height: 600px;
  overflow: hidden;
}

.canvas {
  position: absolute;
  width: 100%;
  height: 100%;
}

.ground {
  fill: #f7f7f5;
}

.grass {
  fill: #ecf1ed;
}

.buildings {
  fill: #ececec;
  filter: drop-shadow(-1px 6px 0 #e0e0de);
}

.annex {
  fill: #e8e8e6;
}

.ridge {
  fill: none;
  stroke: #e0e0e0;
  stroke-width: 4;
}

.casing,
.fill {
  fill: none;
  stroke-linecap: round;
  stroke-linejoin: round;
}

.casing {
  stroke: #e0e0e0;
  --case: 4px;
}

.fill {
  stroke: #fdfdfd;
  --case: 0px;
}

.w10 {
  stroke-width: calc(6px + var(--case));
}

.w12 {
  stroke-width: calc(10px + var(--case));
}

.w14 {
  stroke-width: calc(12px + var(--case));
}

.w18 {
  stroke-width: calc(16px + var(--case));
}

.w26 {
  stroke-width: calc(24px + var(--case));
}

.dotted {
  fill: none;
  stroke: #dcdcdc;
  stroke-width: 3;
  stroke-dasharray: 3 4;
}

.street {
  fill: #b9c6d0;
  font: 700 18px "Open Sans", sans-serif;
}

.boundary {
  fill: none;
  stroke: #209cee;
  stroke-width: 3;
}

.links {
  fill: none;
  stroke: #909090;
  stroke-width: 4;
}

.pipes {
  fill: none;
  stroke-width: 6;
}

.controls {
  position: absolute;
  top: 15px;
  left: 15px;
  display: flex;
  flex-direction: column;
  gap: 15px;
}

.control {
  border: 3px solid #bcc0bd;
  border-radius: 6px;
}

.control button {
  width: 45px;
  height: 45px;
  border-radius: 3px;
  background-color: #fff;
}

.control button + button {
  border-top: 1px solid #ccc;
  border-radius: 0 0 3px 3px;
}

.control svg {
  width: 18px;
  height: 18px;
  stroke: #222;
  stroke-width: 3;
}

.control .full {
  width: 25px;
  height: 25px;
  stroke: none;
  color: #444;
}

.scale {
  position: absolute;
  left: 8px;
  bottom: 7px;
  width: 109px;
  height: 28px;
  padding-left: 7px;
  border: 3px solid #777;
  border-top: none;
  background-color: rgba(255, 255, 255, 0.8);
  color: #444;
  font: 18px/24px "Liberation Sans", sans-serif;
}

.legend {
  position: absolute;
  right: 15px;
  bottom: 15px;
  padding: 13px 15px 22px 18px;
  border-radius: 6px;
  background-color: #fff;
  box-shadow: 4px 6px 18px rgba(0, 0, 0, 0.5);
}

.legend-row {
  display: flex;
  gap: 5px;
}

.legend-icon {
  width: 26px;
  height: 26px;
  margin: 5px 2px 0 0;
  color: #757575;
}

.bar {
  width: 450px;
  height: 92px;
  overflow: visible;
}

.bar text {
  fill: #111;
  font: 19px "DejaVu Sans", sans-serif;
  text-anchor: middle;
}

.bar .caption {
  font-size: 20px;
}

.split {
  stroke: rgba(255, 255, 255, 0.4);
}

.outline {
  fill: none;
  stroke: #111;
  stroke-width: 2;
}

.tick {
  stroke: #111;
  stroke-width: 2;
}

.tick.minor {
  stroke-width: 1;
}

/* details panel */
.panel {
  display: flex;
  flex-direction: column;
  margin: 0 12px 0 18px;
  overflow: hidden;
}

.panel-body {
  flex: 1;
  padding: 46px 0 0 24px;
}

.panel h2 {
  margin: 0 0 41px 18px;
  font-size: 30px;
  font-weight: 400;
  line-height: 36px;
}

.field {
  margin-bottom: 54px;
}

.field label {
  display: block;
  color: #757575;
  font-size: 18px;
  line-height: 22px;
}

.field input {
  width: 100%;
  height: 46px;
  padding: 0 0 4px;
  border: none;
  border-bottom: 1px solid #9a9a9a;
  background: none;
  color: #212121;
  font: 24px Roboto, sans-serif;
}

.panel table {
  width: 420px;
  margin: -36px 0 0 26px;
  border-collapse: collapse;
  border-bottom: 1px solid #444;
  font-size: 24px;
  white-space: nowrap;
}

.panel tr {
  height: 39px;
}

.panel th {
  width: 237px;
  padding: 0;
  text-align: right;
}

.panel td {
  padding: 0 0 0 12px;
}

.scrollbar {
  display: flex;
  align-items: center;
  gap: 12px;
  height: 23px;
  margin-bottom: 18px;
  padding-left: 12px;
  background-color: #fcfcfc;
  color: #8b8b8b;
}

.scrollbar svg {
  width: 11px;
  height: 15px;
}

.thumb {
  width: 332px;
  height: 14px;
  border-radius: 7px;
  background-color: #8b8b8b;
}

.end {
  width: 5px;
  height: 15px;
  margin-left: auto;
  border-radius: 2px 0 0 2px;
  background-color: #8b8b8b;
}

/* status */
.status {
  display: flex;
  align-items: center;
  gap: 27px;
  height: 60px;
  margin: 0 12px 7px 11px;
  padding-left: 27px;
  border-radius: 6px;
  background-color: #e8f3e9;
  color: #4caf50;
  font-size: 24px;
}

.status svg {
  width: 30px;
  height: 30px;
}

.status path {
  fill: none;
  stroke: #fff;
  stroke-width: 3;
}
```
